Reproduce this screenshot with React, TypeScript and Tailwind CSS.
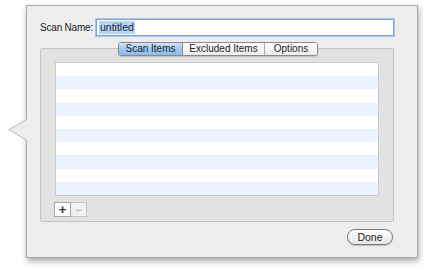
import React from 'react';

const rows = Array.from({ length: 10 }, (_, i) => i);

export default function App() {
  return (
    <div className="relative w-[445px] h-[271px] bg-white overflow-hidden text-[10px] text-[#222]" style={{ fontFamily: '"Lucida Grande", "Liberation Sans", Arial, sans-serif' }}>
      {/* popover pointer */}
      <div className="absolute left-[8px] top-[119px] w-[20px] h-[22px] z-10">
        <svg width="20" height="22" viewBox="0 0 20 22">
          <path d="M19 0.5 L0.8 10.5 L19 21.5" fill="#ededed" stroke="#b8b8b8" strokeWidth="1" />
          <rect x="18.5" y="0" width="2" height="22" fill="#ededed" />
        </svg>
      </div>

      <div className="ml-[26px] mt-[5px] w-[392px] h-[253px] bg-[#ededed] border border-[#a9a9a9] shadow-[1px_3px_6px_rgba(0,0,0,0.35)] flex flex-col">
        {/* name row */}
        <div className="flex items-center pl-[13px] mt-[13px] h-[17px]">
          <span className="w-[56px] shrink-0 whitespace-nowrap text-[10px] tracking-[-0.2px]">Scan Name:</span>
          <div className="w-[298px] shrink-0 h-[17px] bg-white border border-[#7aa3d8] shadow-[0_0_0_1px_#a9c8ef] flex items-center pl-[2px]">
            <span className="bg-[#b5d3fb] px-[1px] leading-[13px] text-[10.5px]">untitled</span>
          </div>
        </div>

        {/* group box with tabs */}
        <div className="relative ml-[13px] mt-[12px] w-[354px] h-[174px] bg-[#e2e2e2] border border-[#c4c4c4] rounded-[2px] flex flex-col">
          <div className="absolute left-[77px] top-[-7px] flex h-[14px] border border-[#8a8a8a] rounded-[3px] overflow-hidden shadow-[0_1px_1px_rgba(0,0,0,0.15)] leading-[12px] whitespace-nowrap">
            <div className="w-[64px] text-center bg-gradient-to-b from-[#cfe4fb] via-[#a2c8f1] to-[#8dbcef] border-r border-[#8a8a8a]">Scan Items</div>
            <div className="w-[82px] text-center bg-gradient-to-b from-white to-[#ececec] border-r border-[#b0b0b0]">Excluded Items</div>
            <div className="w-[52px] text-center bg-gradient-to-b from-white to-[#ececec]">Options</div>
          </div>

          <div className="ml-[14px] mt-[13px] w-[324px] h-[134px] bg-white border border-[#c9c9c9] flex flex-col">
            {rows.map((r) => (
              <div key={r} className={`h-[13.2px] ${r % 2 === 1 ? 'bg-[#ecf2fd]' : 'bg-white'}`} />
            ))}
          </div>

          <div className="flex ml-[13px] mt-[6px]">
            <div className="w-[17px] h-[15px] bg-white border border-[#a8a8a8] flex items-center justify-center text-[13px] font-bold leading-none text-[#333]">+</div>
            <div className="w-[16px] h-[15px] bg-[#f1f1f1] border border-l-0 border-[#c4c4c4] flex items-center justify-center text-[12px] leading-none text-[#aaa]">−</div>
          </div>
        </div>

        <div className="flex justify-end mt-[7px] pr-[24px]">
          <div className="w-[46px] h-[16px] rounded-full border border-[#7a7a7a] bg-gradient-to-b from-white to-[#e6e6e6] shadow-[0_1px_1px_rgba(0,0,0,0.2)] flex items-center justify-center leading-none text-[10.5px]">Done</div>
        </div>
      </div>
    </div>
  );
}
